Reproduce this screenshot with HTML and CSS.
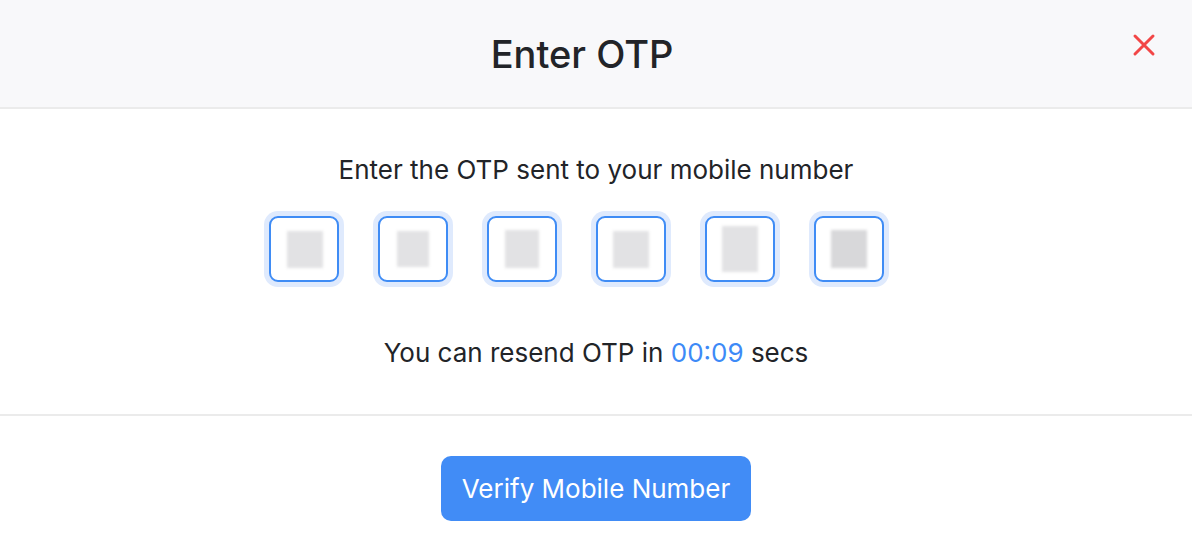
FILE: index.html
```html
<!DOCTYPE html>
<html lang="en">
<head>
    <meta charset="UTF-8">
    <meta name="viewport" content="width=device-width, initial-scale=1.0">
    <title>Enter OTP</title>
    <link rel="stylesheet" href="styles.css">
</head>
<body>
    <div class="modal">
        <div class="modal-header">
            <h1 class="title">Enter OTP</h1>
            <button class="close-btn" aria-label="Close">
                <svg width="24" height="24" viewBox="0 0 24 24">
                    <path d="M3 3 L21 21 M21 3 L3 21" stroke="#f24646" stroke-width="3" stroke-linecap="round"/>
                </svg>
            </button>
        </div>

        <div class="modal-body">
            <p class="subtitle">Enter the OTP sent to your mobile number</p>
            <div class="otp-row">
                <div class="otp-box"><span class="digit d1"></span></div>
                <div class="otp-box"><span class="digit d2"></span></div>
                <div class="otp-box"><span class="digit d3"></span></div>
                <div class="otp-box"><span class="digit d4"></span></div>
                <div class="otp-box"><span class="digit d5"></span></div>
                <div class="otp-box"><span class="digit d6"></span></div>
            </div>
            <p class="resend">You can resend OTP in <span class="timer">00:09</span> secs</p>
        </div>

        <div class="modal-footer">
            <button class="verify-btn">Verify Mobile Number</button>
        </div>
    </div>
</body>
</html>
```

FILE: styles.css
```css
body {
    margin: 0;
    font-family: Inter, "Noto Sans", sans-serif;
    background: white;
    color: #222428;
}
.modal {
    width: 1192px;
    height: 544px;
    display: flex;
    flex-direction: column;
}
.modal-header {
    height: 107px;
    background-color: #f8f8fa;
    border-bottom: 2px solid #ebebeb;
    display: flex;
    align-items: center;
    justify-content: center;
    padding-right: 28px;
    position: relative;
}
.title {
    margin: 0;
    font-size: 38px;
    font-weight: 500;
    color: #222428;
}
.close-btn {
    position: absolute;
    right: 36px;
    top: 33px;
    background: none;
    border: none;
    padding: 0;
    cursor: pointer;
    width: 24px;
    height: 24px;
}
.modal-body {
    height: 305px;
    border-bottom: 2px solid #ebebeb;
    display: flex;
    flex-direction: column;
    align-items: center;
}
.subtitle {
    margin: 45px 0 0;
    font-size: 26px;
    line-height: 32px;
}
.otp-row {
    display: flex;
    margin-top: 30px;
    padding-left: 39px;
}
.otp-box {
    width: 66px;
    height: 62px;
    margin-right: 39px;
    border: 2px solid #3f8cf5;
    border-radius: 9px;
    box-shadow: 0 0 0 5px #dfeafd;
    display: flex;
    align-items: center;
    justify-content: center;
    background: white;
}
.otp-box:last-child {
    margin-right: 79px;
}
.digit {
    display: block;
    background: #e2e2e4;
    filter: blur(1.5px);
}
.d1 { width: 36px; height: 37px; margin-left: 2px; }
.d2 { width: 32px; height: 36px; }
.d3 { width: 34px; height: 38px; }
.d4 { width: 36px; height: 37px; }
.d5 { width: 36px; height: 46px; }
.d6 { width: 36px; height: 38px; background: #d8d8da; }
.resend {
    margin: 55px 0 0;
    font-size: 26px;
    line-height: 32px;
}
.timer {
    color: #3d8af7;
}
.modal-footer {
    flex: 1;
    display: flex;
    justify-content: center;
    padding-top: 40px;
}
.verify-btn {
    width: 310px;
    height: 65px;
    background-color: #418cf6;
    color: white;
    border: none;
    border-radius: 10px;
    font-family: Inter, "Noto Sans", sans-serif;
    font-size: 26px;
    cursor: pointer;
}
```
